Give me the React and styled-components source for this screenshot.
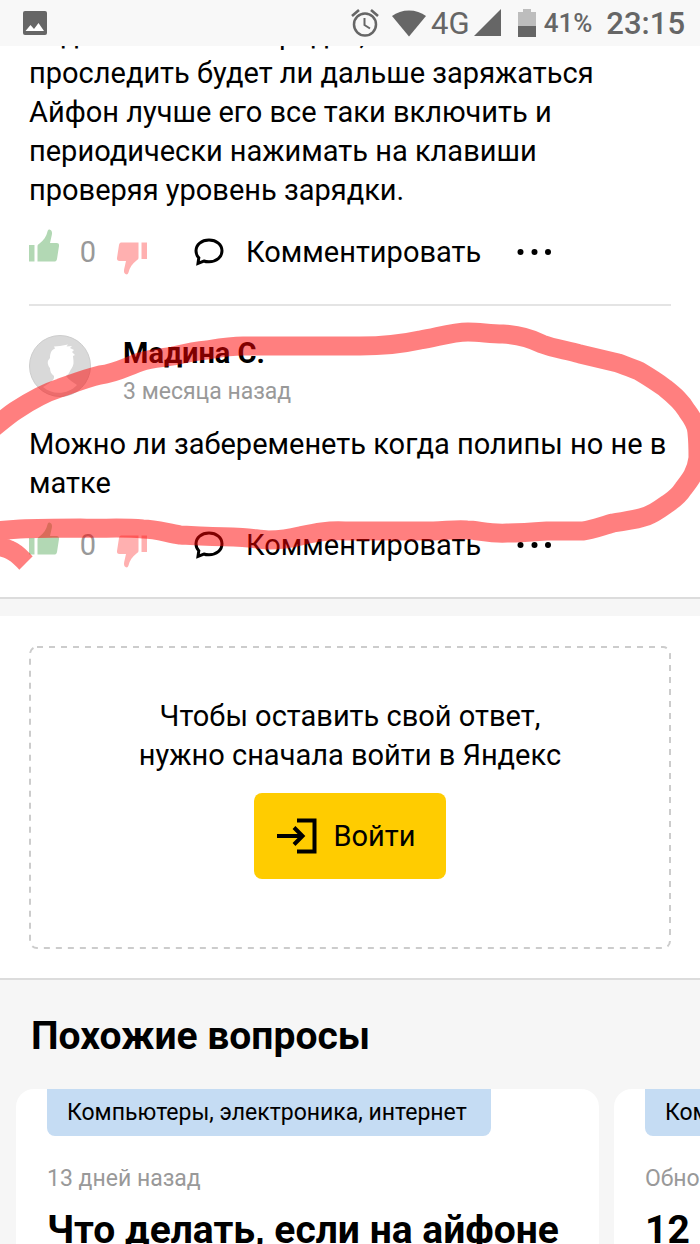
import React from 'react'
import styled, { createGlobalStyle } from 'styled-components'

const GlobalStyle = createGlobalStyle`
  html {
    scrollbar-width: none;
  }
  body {
    margin: 0;
    background: #f6f6f6;
    color: #000;
    font-family: Roboto, 'Noto Sans', sans-serif;
    font-size: 29px;
    line-height: 39px;
  }
  * {
    box-sizing: border-box;
  }
`

const Screen = styled.div`
  position: relative;
  height: 100vh;
  overflow-x: hidden;
  overflow-y: auto;
  scrollbar-width: none;
`

const StatusBar = styled.header`
  position: fixed;
  z-index: 3;
  top: 0;
  left: 0;
  right: 0;
  height: 46px;
  padding: 0 15px 0 22px;
  display: flex;
  align-items: center;
  justify-content: space-between;
  background: #f8f8f8;
  color: #666;
`

const StatusGroup = styled.div`
  display: flex;
  align-items: center;
  height: 46px;
`

const StatusIcon = styled.svg`
  display: block;
  flex: none;
  margin-left: ${(props) => props.$gap || 0}px;
`

const Network = styled.span`
  margin-left: 4px;
  font-size: 31px;
  font-weight: 400;
`

const Battery = styled.span`
  margin-left: 8px;
  font-size: 26px;
  font-weight: 500;
`

const Clock = styled.time`
  margin-left: 14px;
  font-size: 31px;
  font-weight: 500;
`

const Thread = styled.section`
  padding: 15px 29px 0;
  border-bottom: 2px solid #dcdcdc;
  background: #fff;
`

const Comment = styled.article`
  padding-bottom: 20px;
  & + & {
    padding-top: 29px;
    border-top: 2px solid #e4e4e4;
  }
`

const Text = styled.p`
  margin: 0;
`

const Author = styled.div`
  display: flex;
  gap: 32px;
  margin-bottom: 12px;
  svg {
    display: block;
    flex: none;
  }
`

const AuthorInfo = styled.div`
  display: flex;
  flex-direction: column;
`

const Name = styled.a`
  color: #000;
  font-weight: 700;
  line-height: 36px;
  text-decoration: none;
`

const DateText = styled.time`
  color: #999;
  font-size: 23px;
  line-height: 42px;
`

const Actions = styled.div`
  display: flex;
  align-items: center;
  height: 64px;
  margin-top: 10px;
`

const IconButton = styled.button`
  display: flex;
  padding: 0;
  border: 0;
  background: none;
  color: inherit;
  font: inherit;
`

const Vote = styled(IconButton)`
  height: ${(props) => (props.$down ? '64px' : '50px')};
  align-items: ${(props) => (props.$down ? 'flex-end' : 'center')};
  align-self: flex-start;
  padding-bottom: ${(props) => (props.$down ? '9px' : '0')};
  color: ${(props) => (props.$down ? '#ffb0b0' : '#b2d8b4')};
`

const Score = styled.span`
  width: 56px;
  color: #999;
  text-align: center;
`

const Reply = styled(IconButton)`
  align-items: center;
  gap: 22px;
  margin-left: 47px;
`

const More = styled(IconButton)`
  margin-left: 36px;
`

const LoginSection = styled.section`
  margin-top: 17px;
  padding: 30px 29px 29px;
  border-bottom: 2px solid #dcdcdc;
  background: #fff;
`

const LoginBox = styled.div`
  position: relative;
  display: flex;
  flex-direction: column;
  align-items: center;
  padding: 51px 20px 70px;
  text-align: center;
`

const Dashes = styled.svg`
  position: absolute;
  top: 0;
  left: 0;
  width: 100%;
  height: 100%;
  overflow: visible;
  rect {
    width: calc(100% - 2px);
    height: calc(100% - 2px);
  }
`

const LoginButton = styled.button`
  position: relative;
  display: flex;
  align-items: center;
  gap: 16px;
  height: 86px;
  margin-top: 18px;
  padding: 0 30px 0 23px;
  border: 0;
  border-radius: 8px;
  background: #fc0;
  color: #000;
  font: inherit;
`

const Similar = styled.section`
  padding: 30px 0 0 16px;
`

const Heading = styled.h2`
  margin: 0 0 27px;
  padding-left: 15px;
  font-size: 39px;
  line-height: 52px;
`

const Cards = styled.div`
  display: flex;
  gap: 15px;
  overflow: hidden;
`

const Card = styled.article`
  flex: 0 0 calc(100% - 101px);
  padding: 0 31px 16px;
  border-radius: 18px;
  background: #fff;
`

const Tag = styled.a`
  display: inline-block;
  padding: 1px 24px 0 20px;
  border-radius: 0 0 8px 8px;
  background: #c5dcf3;
  color: #000;
  font-size: 23px;
  line-height: 46px;
  text-decoration: none;
  white-space: nowrap;
`

const CardDate = styled(DateText)`
  display: block;
  margin-top: 22px;
`

const CardTitle = styled.h3`
  margin: 6px 0 0;
  font-size: 39px;
  line-height: 48px;
  white-space: nowrap;
`

const Marker = styled.svg`
  position: absolute;
  z-index: 2;
  top: 310px;
  left: 0;
  width: 100%;
  height: 270px;
  pointer-events: none;
`

const PictureIcon = () => (
  <StatusIcon width="26" height="26" viewBox="0 0 26 26" aria-hidden="true">
    <rect x="1" y="1" width="24" height="24" rx="2" fill="#666" />
    <path d="M3.500 21 8.500 15 12 19 16.500 13 22 21Z" fill="#fff" />
  </StatusIcon>
)

const AlarmIcon = () => (
  <StatusIcon width="28" height="30" viewBox="0 0 28 30" fill="none" stroke="#666" aria-hidden="true">
    <circle cx="14" cy="16.500" r="11" strokeWidth="2.500" />
    <path d="M13.500 10v7l5.500 3.500" strokeWidth="2" />
    <path d="M1 8 8 2M20 2l7 6" strokeWidth="2.600" />
  </StatusIcon>
)

const WifiIcon = () => (
  <StatusIcon $gap={12} width="36" height="30" viewBox="0 0 36 30" aria-hidden="true">
    <path d="M1 8C10 .5 26 .5 35 8L18 28.500Z" fill="#666" />
  </StatusIcon>
)

const SignalIcon = () => (
  <StatusIcon $gap={3} width="28" height="28" viewBox="0 0 28 28" aria-hidden="true">
    <path d="M28 0V27H1Z" fill="#666" />
  </StatusIcon>
)

const BatteryIcon = () => (
  <StatusIcon $gap={17} width="18" height="28" viewBox="0 0 18 28" aria-hidden="true">
    <path d="M0 3h5V0h8v3h5v15H0Z" fill="#bdbdbd" />
    <path d="M0 17h18v11H0Z" fill="#666" />
  </StatusIcon>
)

const ThumbIcon = ({ down }) => (
  <svg width="31" height="33" viewBox="0 0 31 33" fill="currentColor" aria-hidden="true">
    <g transform={down ? 'rotate(180 15.5 16.5)' : undefined}>
      <path d="M0 16H5.500V32.500H0Z" />
      <path d="M8.500 17.500C8.500 16 9 15.500 10.500 14.500C14.500 11.500 17.500 7.500 18.500 2.500C19 .8 20 .3 21 .7C23 1.400 23.300 3.500 22.800 6L21 14H27.500C29.500 14 30.200 15 30 17L28 30C27.600 32 26.700 32.500 25 32.500H8.500Z" />
    </g>
  </svg>
)

const BubbleIcon = () => (
  <svg width="30" height="28" viewBox="0 0 30 28" fill="none" stroke="#000" strokeWidth="3" aria-hidden="true">
    <path d="M15 2C22.500 2 28 6.500 28 12.800S22.500 23.800 15 23.800C13 23.800 11.300 23.600 9.800 23L4 25.300L4.800 19.800C3 18 2 15.500 2 12.800C2 6.500 7.500 2 15 2Z" />
  </svg>
)

const DotsIcon = () => (
  <svg width="35" height="8" viewBox="0 0 35 8" aria-hidden="true">
    <circle cx="3.500" cy="4" r="3" />
    <circle cx="17.500" cy="4" r="3" />
    <circle cx="31" cy="4" r="3" />
  </svg>
)

const Avatar = () => (
  <svg width="62" height="62" viewBox="0 0 62 62" aria-hidden="true">
    <circle cx="31" cy="31" r="30.500" fill="#d9d9d9" stroke="#cdcdcd" />
    <path
      d="M21 23C21 19 22 15 26 13.500L25 11.500L31 11L39 9.500L37.500 11.500L43 11L41 13L45 15L43 17L46 20L44 21L44.500 26C45 30 43 33 41.500 35C40 39 38 40 37 41C40 45 44 47 48 50C39 60 23 60 14 52C19 49 24 46 25 43V41C22 39 21 36 21 33C19 31 18 27 19.500 25Z"
      fill="#fff"
    />
  </svg>
)

const LoginIcon = () => (
  <svg width="40" height="36" viewBox="0 0 40 36" fill="none" stroke="#000" strokeWidth="4" aria-hidden="true">
    <path d="M20 2.500H37.500V33.500H20M0 18H25M17 9.500 25.500 18 17 26.500" />
  </svg>
)

const CommentActions = () => (
  <Actions>
    <Vote type="button" aria-label="Нравится">
      <ThumbIcon />
    </Vote>
    <Score>0</Score>
    <Vote type="button" aria-label="Не нравится" $down>
      <ThumbIcon down />
    </Vote>
    <Reply type="button">
      <BubbleIcon />
      Комментировать
    </Reply>
    <More type="button" aria-label="Ещё">
      <DotsIcon />
    </More>
  </Actions>
)

const cards = [
  {
    tag: 'Компьютеры, электроника, интернет',
    date: '13 дней назад',
    title: 'Что делать, если на айфоне',
  },
  {
    tag: 'Компьютеры, электроника, интернет',
    date: 'Обновлено',
    title: '12 айфон',
  },
]

const App = () => (
  <>
    <GlobalStyle />
    <Screen>
      <StatusBar>
        <PictureIcon />
        <StatusGroup>
          <AlarmIcon />
          <WifiIcon />
          <Network>4G</Network>
          <SignalIcon />
          <BatteryIcon />
          <Battery>41%</Battery>
          <Clock>23:15</Clock>
        </StatusGroup>
      </StatusBar>

      <Thread>
        <Comment>
          <Text>
            подключи его к зарядке,
            <br />
            проследить будет ли дальше заряжаться Айфон лучше его все таки включить и периодически
            нажимать на клавиши проверяя уровень зарядки.
          </Text>
          <CommentActions />
        </Comment>
        <Comment>
          <Author>
            <Avatar />
            <AuthorInfo>
              <Name href="#author">Мадина С.</Name>
              <DateText>3 месяца назад</DateText>
            </AuthorInfo>
          </Author>
          <Text>Можно ли забеременеть когда полипы но не в матке</Text>
          <CommentActions />
        </Comment>
      </Thread>

      <LoginSection>
        <LoginBox>
          <Dashes aria-hidden="true">
            <rect x="1" y="1" rx="7" fill="none" stroke="#ccc" strokeWidth="2" strokeDasharray="6 6" />
          </Dashes>
          <Text>
            Чтобы оставить свой ответ,
            <br />
            нужно сначала войти в Яндекс
          </Text>
          <LoginButton type="button">
            <LoginIcon />
            Войти
          </LoginButton>
        </LoginBox>
      </LoginSection>

      <Similar>
        <Heading>Похожие вопросы</Heading>
        <Cards>
          {cards.map((card) => (
            <Card key={card.title}>
              <Tag href="#topic">{card.tag}</Tag>
              <CardDate>{card.date}</CardDate>
              <CardTitle>{card.title}</CardTitle>
            </Card>
          ))}
        </Cards>
      </Similar>

      <Marker viewBox="0 310 700 270" preserveAspectRatio="none" aria-hidden="true">
        <path
          d="M-12 432C0 423 6 417 15 411C30 401 44 393 60 388C74 383 87 378 100 375C116 373 126 367 140 362C152 358 162 358 173 356C186 353 195 351 207 350C219 348 230 346 243 346H360C382 346 402 344 420 340C438 337 452 332 468 332C480 332 490 334 503 334C519 335 530 338 542 344C555 349 567 350 580 354L618 363C626 366 632 368 639 371C649 377 657 382 665 388C675 396 682 402 687 411C693 419 697 426 697 433C698 442 698 452 698 458C696 473 690 480 683 489C678 497 674 499 667 504C660 509 655 513 647 516C636 520 624 521 613 523C602 526 592 530 583 531H547C534 532 520 533 507 533C489 534 478 530 467 530C455 529 445 531 433 531H345C327 530 314 533 300 536C289 539 279 540 268 540C256 539 245 537 233 537C213 537 198 536 180 535C167 533 156 529 143 529C120 527 101 529 80 528C60 528 40 528 20 529L-8 531L-6 545C2 547 6 548 10 550C17 553 20 557 26 563"
          fill="none"
          stroke="#f00"
          strokeOpacity="0.500"
          strokeWidth="19"
          strokeLinejoin="round"
        />
      </Marker>
    </Screen>
  </>
)

export default App
